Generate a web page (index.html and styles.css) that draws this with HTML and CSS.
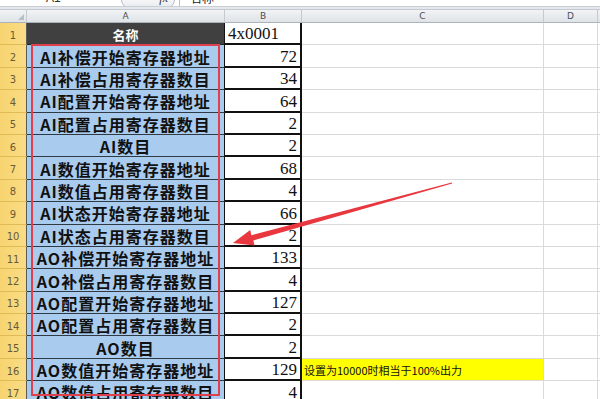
FILE: index.html
```html
<!DOCTYPE html>
<html lang="zh">
<head>
<meta charset="utf-8">
<title>Sheet</title>
<link rel="stylesheet" href="styles.css">
</head>
<body>
<div class="app">
  <div class="fbar">
    <div class="namebox"><span class="nb-text">A1</span><span class="dd"></span></div>
    <div class="split"><span class="fx">fx</span></div>
    <div class="fdiv"></div>
    <div class="fval">名称</div>
  </div>
  <div class="gap"></div>
  <div class="sheet">
    <div class="ch corner"><span class="tri"></span></div>
    <div class="ch">A</div><div class="ch">B</div><div class="ch">C</div><div class="ch">D</div><div class="ch">&nbsp;</div>

    <div class="rh">1</div><div class="ca head">名称</div><div class="cb left">4x0001</div><div class="cc"></div><div class="cd"></div><div class="ce"></div>
    <div class="rh">2</div><div class="ca">AI补偿开始寄存器地址</div><div class="cb">72</div><div class="cc"></div><div class="cd"></div><div class="ce"></div>
    <div class="rh">3</div><div class="ca">AI补偿占用寄存器数目</div><div class="cb">34</div><div class="cc"></div><div class="cd"></div><div class="ce"></div>
    <div class="rh">4</div><div class="ca">AI配置开始寄存器地址</div><div class="cb">64</div><div class="cc"></div><div class="cd"></div><div class="ce"></div>
    <div class="rh">5</div><div class="ca">AI配置占用寄存器数目</div><div class="cb">2</div><div class="cc"></div><div class="cd"></div><div class="ce"></div>
    <div class="rh">6</div><div class="ca">AI数目</div><div class="cb">2</div><div class="cc"></div><div class="cd"></div><div class="ce"></div>
    <div class="rh">7</div><div class="ca">AI数值开始寄存器地址</div><div class="cb">68</div><div class="cc"></div><div class="cd"></div><div class="ce"></div>
    <div class="rh">8</div><div class="ca">AI数值占用寄存器数目</div><div class="cb">4</div><div class="cc"></div><div class="cd"></div><div class="ce"></div>
    <div class="rh">9</div><div class="ca">AI状态开始寄存器地址</div><div class="cb">66</div><div class="cc"></div><div class="cd"></div><div class="ce"></div>
    <div class="rh">10</div><div class="ca">AI状态占用寄存器数目</div><div class="cb">2</div><div class="cc"></div><div class="cd"></div><div class="ce"></div>
    <div class="rh">11</div><div class="ca">AO补偿开始寄存器地址</div><div class="cb">133</div><div class="cc"></div><div class="cd"></div><div class="ce"></div>
    <div class="rh">12</div><div class="ca">AO补偿占用寄存器数目</div><div class="cb">4</div><div class="cc"></div><div class="cd"></div><div class="ce"></div>
    <div class="rh">13</div><div class="ca">AO配置开始寄存器地址</div><div class="cb">127</div><div class="cc"></div><div class="cd"></div><div class="ce"></div>
    <div class="rh">14</div><div class="ca">AO配置占用寄存器数目</div><div class="cb">2</div><div class="cc"></div><div class="cd"></div><div class="ce"></div>
    <div class="rh">15</div><div class="ca">AO数目</div><div class="cb">2</div><div class="cc"></div><div class="cd"></div><div class="ce"></div>
    <div class="rh">16</div><div class="ca">AO数值开始寄存器地址</div><div class="cb">129</div><div class="cc note">设置为10000时相当于100%出力</div><div class="cd"></div><div class="ce"></div>
    <div class="rh">17</div><div class="ca">AO数值占用寄存器数目</div><div class="cb">4</div><div class="cc"></div><div class="cd"></div><div class="ce"></div>
  </div>
  <div class="redbox"></div>
  <svg class="arrow" width="600" height="399" viewBox="0 0 600 399">
    <polygon points="452.2,183.6 253.3,240.4 254.6,245.6 233,243 250.2,230 251.4,235.2 451.8,182.4" fill="#e8373e"/>
  </svg>
</div>
</body>
</html>
```

FILE: styles.css
```css
html, body {
  margin: 0;
  padding: 0;
  background: #ffffff;
}
.app {
  position: relative;
  width: 600px;
  height: 399px;
  overflow: hidden;
  font-family: "Liberation Sans", "Noto Sans CJK SC", sans-serif;
}
.fbar {
  height: 7px;
  box-sizing: border-box;
  display: flex;
  align-items: flex-end;
  background: #ffffff;
  overflow: hidden;
  border-bottom: 1px solid #c9ced5;
}
.namebox {
  width: 118px;
  height: 14px;
  display: flex;
  align-items: flex-end;
  flex-shrink: 0;
  margin-bottom: 1px;
}
.nb-text {
  margin-left: 46px;
  font-size: 12px;
  line-height: 14px;
  color: #333;
}
.dd {
  margin-left: 45px;
  margin-bottom: 10px;
  width: 0;
  height: 0;
  border-left: 3px solid transparent;
  border-right: 3px solid transparent;
  border-top: 3px solid #333;
}
.split {
  width: 54px;
  height: 16px;
  box-sizing: border-box;
  border: 1px solid #b5bac1;
  border-radius: 8px;
  background: linear-gradient(#ffffff, #e9ecef);
  display: flex;
  align-items: flex-end;
  justify-content: flex-end;
  margin-left: 3px;
  margin-bottom: -2px;
  flex-shrink: 0;
}
.fx {
  font-family: "Liberation Serif", serif;
  font-style: italic;
  font-size: 12px;
  line-height: 14px;
  color: #333;
  margin-right: 6px;
  margin-bottom: 2px;
}
.fdiv {
  width: 1px;
  height: 7px;
  background: #b9bec5;
  margin-left: 4px;
  flex-shrink: 0;
}
.fval {
  margin-left: 10px;
  font-family: "Noto Sans CJK SC", sans-serif;
  font-size: 12px;
  line-height: 14px;
  margin-bottom: 1px;
  color: #222;
}
.gap {
  height: 3px;
  box-sizing: border-box;
  background: #e4e8ec;
  border-bottom: 1px solid #c3c9d0;
}
.sheet {
  display: grid;
  grid-template-columns: 27px 198px 77px 242px 54px 1fr;
  grid-template-rows: 13px repeat(17, 22.4px);
}
.ch {
  box-sizing: border-box;
  background: linear-gradient(#f1f3f5, #dfe3e7);
  border-right: 1px solid #c5cad0;
  border-bottom: 1px solid #aab2bb;
  font-family: "DejaVu Sans", sans-serif;
  font-size: 9px;
  line-height: 12px;
  color: #4a4f55;
  text-align: center;
}
.corner {
  position: relative;
}
.tri {
  position: absolute;
  right: 2px;
  bottom: 2px;
  width: 0;
  height: 0;
  border-left: 6px solid transparent;
  border-bottom: 6px solid #b9bec4;
}
.rh {
  box-sizing: border-box;
  background: linear-gradient(90deg, #f7d470, #f9dc86);
  border-bottom: 1px solid #e0bb55;
  border-right: 1px solid #5a5a5a;
  font-family: "DejaVu Sans", sans-serif;
  font-size: 10px;
  color: #6a5a35;
  display: flex;
  align-items: center;
  justify-content: center;
  padding-top: 3px;
}
.ca {
  box-sizing: border-box;
  background: #a9cbee;
  border-bottom: 1px solid #2f3a45;
  border-right: 1px solid #111;
  font-family: "Noto Sans CJK SC", sans-serif;
  font-weight: 700;
  font-size: 16px;
  letter-spacing: 1px;
  color: #111;
  white-space: nowrap;
  display: flex;
  align-items: center;
  justify-content: center;
  padding-top: 1px;
}
.ca.head {
  background: #404040;
  color: #ffffff;
  font-size: 13px;
  letter-spacing: 0;
  border-bottom-color: #222;
}
.cb {
  box-sizing: border-box;
  background: #ffffff;
  border-bottom: 2px solid #111;
  border-right: 2px solid #111;
  font-family: "Liberation Serif", serif;
  font-size: 17px;
  color: #111;
  display: flex;
  align-items: flex-end;
  justify-content: flex-end;
  padding-right: 3px;
  line-height: 19px;
}
.cb.left {
  justify-content: flex-start;
  padding-left: 3px;
}
.cc, .cd, .ce {
  box-sizing: border-box;
  background: #ffffff;
  border-bottom: 1px solid #dadada;
  border-right: 1px solid #dadada;
}
.cc.note {
  background: #ffff00;
  font-family: "Noto Sans CJK SC", sans-serif;
  font-size: 11px;
  color: #111;
  white-space: nowrap;
  display: flex;
  align-items: flex-end;
  padding-left: 2px;
  padding-bottom: 2px;
}
.redbox {
  position: absolute;
  left: 31px;
  top: 44px;
  width: 189px;
  height: 352px;
  box-sizing: border-box;
  border: 2px solid #e0404b;
}
.arrow {
  position: absolute;
  left: 0;
  top: 0;
}
```
